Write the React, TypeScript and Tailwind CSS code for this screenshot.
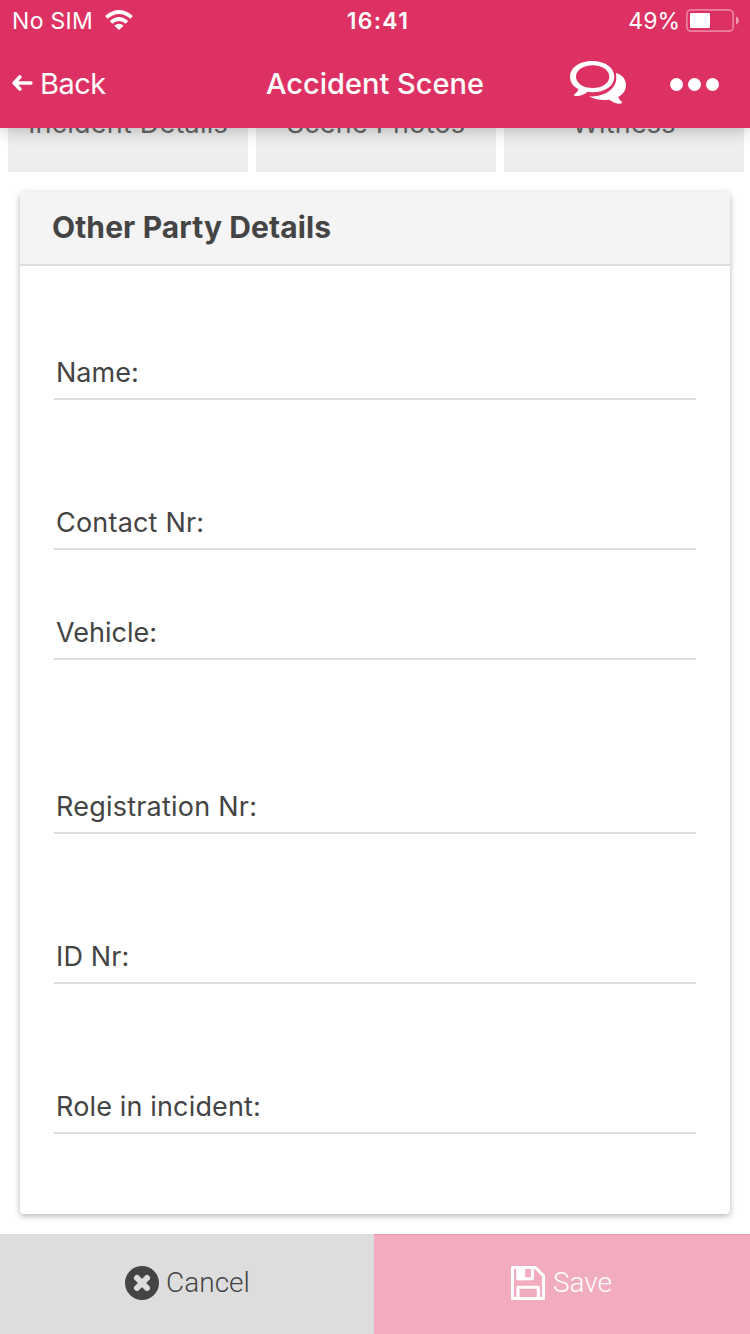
import { clsx } from 'clsx';

const tabs = ['Incident Details', 'Scene Photos', 'Witness'];

const fields = [
  { label: 'Name:', height: 'h-[134px]', tracking: 'tracking-normal' },
  { label: 'Contact Nr:', height: 'h-[150px]', tracking: 'tracking-[0.2px]' },
  { label: 'Vehicle:', height: 'h-[110px]', tracking: 'tracking-normal' },
  { label: 'Registration Nr:', height: 'h-[174px]', tracking: 'tracking-[0.22px]' },
  { label: 'ID Nr:', height: 'h-[150px]', tracking: 'tracking-[0.15px]' },
  { label: 'Role in incident:', height: 'h-[150px]', tracking: 'tracking-[0.15px]' },
];

function WifiIcon() {
  return (
    <svg viewBox="0 0 84 60" className="w-7 h-5 mb-0.5" fill="none" stroke="currentColor" strokeWidth="11">
      <path d="M4 22 Q42 -10 80 22" />
      <path d="M18 37 Q42 17 66 37" />
      <path d="M42 60 L28 47 Q42 36 56 47 Z" fill="currentColor" stroke="none" />
    </svg>
  );
}

function BatteryIcon() {
  return (
    <svg viewBox="0 0 159 69" className="w-[53px] h-[23px] mb-px">
      <rect x="2.5" y="2.5" width="139" height="64" rx="13" fill="none" stroke="white" strokeOpacity="0.4" strokeWidth="5" />
      <rect x="12" y="12" width="60" height="45" rx="4" fill="white" />
      <path d="M150 22 Q159 27 159 34.500 Q159 42 150 47 Z" fill="white" fillOpacity="0.5" />
    </svg>
  );
}

function BackArrow() {
  return (
    <svg viewBox="0 0 62 48" className="w-[21px] h-4 mb-0.5" fill="none" stroke="currentColor" strokeWidth="11" strokeLinecap="round" strokeLinejoin="round">
      <path d="M6 24 H56 M23 6 L6 24 L23 42" />
    </svg>
  );
}

function ChatIcon() {
  return (
    <svg viewBox="210 183 168 129" className="w-14 h-[43px] mb-[3px]" fill="currentColor">
      <path
        fillRule="evenodd"
        d="M277 183 C315 183 343 203 343 230 C343 257 315 277 277 277 L263 275 C252 284 237 290 222 287 C219 284 235 276 235 267 C219 259 210 246 210 230 C210 203 239 183 277 183 Z M278 196 C249 196 228 211 228 230 C228 249 249 264 278 264 C307 264 328 249 328 230 C328 211 307 196 278 196 Z"
      />
      <path d="M348 219 C367 223 378 239 378 256 C378 271 369 283 355 291 C356 299 366 303 366 309 C361 313 344 312 328 299 C304 302 282 298 267 289 C305 291 335 275 345 252 C350 241 349 230 348 219 Z" />
    </svg>
  );
}

function CloseIcon() {
  return (
    <svg viewBox="0 0 34 34" className="size-[34px]">
      <circle cx="17" cy="17" r="17" fill="#444" />
      <path d="M12 12 L22 22 M22 12 L12 22" stroke="#ddd" strokeWidth="6" strokeLinecap="round" />
    </svg>
  );
}

function SaveIcon() {
  return (
    <svg viewBox="0 0 102 102" className="size-[34px]" fill="none" stroke="currentColor" strokeWidth="9" strokeLinejoin="round">
      <path d="M4.500 4.500 H73 L97.500 29 V97.500 H4.500 Z" />
      <path d="M21 4 V38 H64 V4" />
      <path d="M21 4 H38 V38 H21 Z" fill="currentColor" />
      <path d="M21 98 V64 H82 V98" />
    </svg>
  );
}

export default function App() {
  return (
    <div className="flex flex-col w-[750px] h-[1334px] bg-white overflow-hidden text-[#444] font-['Inter',sans-serif]">
      <header className="relative z-10 h-32 shrink-0 bg-[#de3163] text-white shadow-[0_2px_16px_rgba(0,0,0,0.25)]">
        <div className="grid grid-cols-3 items-center h-[42px] px-[11px] text-[23px]">
          <div className="flex items-center gap-3 pl-px">
            <span className="tracking-[0.3px]">No SIM</span>
            <WifiIcon />
          </div>
          <span className="pl-1.5 text-center font-semibold tracking-[1.3px]">16:41</span>
          <div className="flex items-center justify-end gap-1.5">
            <span>49%</span>
            <BatteryIcon />
          </div>
        </div>
        <div className="grid grid-cols-3 items-center h-[84px] px-3 text-[29px]">
          <button className="flex items-center gap-[7px]">
            <BackArrow />
            <span className="tracking-[-0.5px]">Back</span>
          </button>
          <h1 className="text-center font-medium whitespace-nowrap">Accident Scene</h1>
          <div className="flex items-center justify-end gap-11 pr-[19px]">
            <ChatIcon />
            <div className="flex gap-[5px]">
              <span className="size-[13px] rounded-full bg-white" />
              <span className="size-[13px] rounded-full bg-white" />
              <span className="size-[13px] rounded-full bg-white" />
            </div>
          </div>
        </div>
      </header>

      <main className="flex-1 min-h-0">
        <nav className="flex gap-2 pl-2 -mt-11">
          {tabs.map((tab) => (
            <button key={tab} className="w-60 h-[88px] shrink-0 pb-2 bg-[#eee] text-[27px] tracking-[0.2px] text-[#666]">
              {tab}
            </button>
          ))}
        </nav>

        <section className="flex flex-col mx-5 mt-5 h-[1022px] rounded-[4px] bg-white shadow-[0_2px_6px_rgba(0,0,0,0.3)]">
          <h2 className="flex items-center h-[74px] px-8 pb-0.5 rounded-t-[4px] border-b-2 border-[#ddd] bg-[#f4f4f4] text-[30px] font-bold tracking-[0.1px]">
            Other Party Details
          </h2>
          <div className="px-[34px]">
            {fields.map((field) => (
              <div key={field.label} className={clsx('flex items-end pl-0.5 pb-[7px] border-b-2 border-[#ddd]', field.height)}>
                <label className={clsx('text-[27px] leading-9', field.tracking)}>{field.label}</label>
              </div>
            ))}
          </div>
        </section>
      </main>

      <footer className="flex h-[100px] shrink-0 text-[28px] font-light font-['Roboto',sans-serif]">
        <button className="flex items-center justify-center gap-[7px] w-[374px] pl-px pb-0.5 bg-[#ddd]">
          <CloseIcon />
          Cancel
        </button>
        <button className="flex items-center justify-center gap-2 flex-1 pr-px pb-[3px] border-t border-[#e197ac] bg-[#f2acbf] text-white">
          <SaveIcon />
          Save
        </button>
      </footer>
    </div>
  );
}
